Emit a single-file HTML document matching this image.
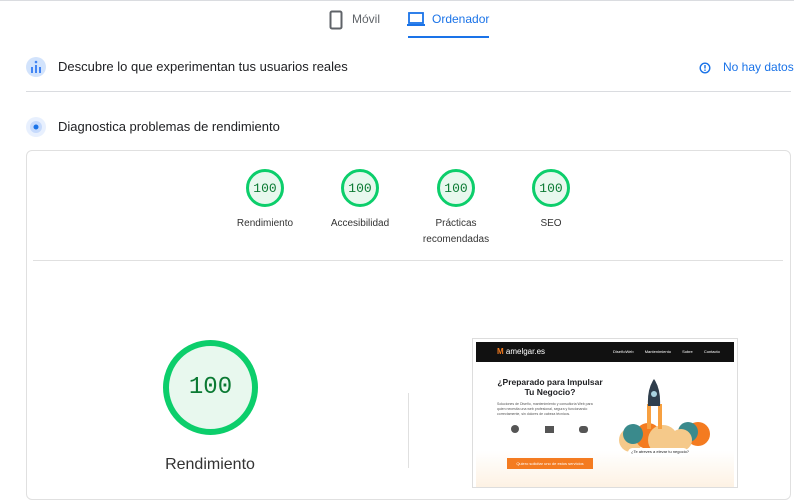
<!DOCTYPE html>
<html><head><meta charset="utf-8"><style>
*{margin:0;padding:0;box-sizing:border-box}
body{width:794px;height:488px;overflow:hidden;background:#fff;font-family:"Liberation Sans",sans-serif;position:relative;color:#202124}
.a{position:absolute}
.g{position:absolute;width:38px;height:38px;border-radius:50%;border:3px solid #0cce6b;background:#e8f8ee;color:#0b7a33;font:13px "Liberation Mono",monospace;display:flex;align-items:center;justify-content:center}
.l{position:absolute;font-size:10px;color:#333;text-align:center;width:100px;line-height:16px}
</style></head><body>
<div class="a" style="left:0;top:0;width:794px;height:1px;background:#dadce0"></div>
<svg class="a" style="left:329px;top:10px" width="14" height="20"><rect x="1.5" y="1.5" width="11" height="17" rx="1.5" fill="none" stroke="#5f6368" stroke-width="2"/></svg>
<div class="a" style="left:352px;top:12px;font-size:12px;color:#5f6368">Móvil</div>
<svg class="a" style="left:407px;top:12px" width="18" height="15"><rect x="2" y="1" width="14" height="10" fill="none" stroke="#1a73e8" stroke-width="1.8"/><rect x="0" y="12" width="18" height="2" fill="#1a73e8"/></svg>
<div class="a" style="left:432px;top:12px;font-size:12px;color:#1a73e8">Ordenador</div>
<div class="a" style="left:408px;top:36px;width:81px;height:2px;background:#1a73e8"></div>
<svg class="a" style="left:26px;top:57px" width="20" height="20"><circle cx="10" cy="10" r="10" fill="#d2e3fc"/><rect x="5" y="10" width="2" height="6" fill="#4285f4"/><rect x="9" y="8" width="2" height="8" fill="#4285f4"/><rect x="13" y="10" width="2" height="6" fill="#4285f4"/><circle cx="10" cy="5" r="1.3" fill="#4285f4"/></svg>
<div class="a" style="left:58px;top:59px;font-size:13px">Descubre lo que experimentan tus usuarios reales</div>
<svg class="a" style="left:699px;top:62px" width="12" height="12"><circle cx="6" cy="6" r="4.8" fill="none" stroke="#1a73e8" stroke-width="1.4"/><rect x="5.3" y="3" width="1.4" height="3.5" fill="#1a73e8"/><rect x="5.3" y="7.5" width="1.4" height="1.4" fill="#1a73e8"/></svg>
<div class="a" style="left:723px;top:60px;font-size:12px;color:#1a73e8">No hay datos</div>
<div class="a" style="left:26px;top:91px;width:765px;height:1px;background:#dadce0"></div>
<svg class="a" style="left:26px;top:117px" width="20" height="20"><circle cx="10" cy="10" r="10" fill="#e8f0fe"/><circle cx="10" cy="10" r="6" fill="#c6dafc"/><circle cx="10" cy="10" r="2.5" fill="#1a73e8"/></svg>
<div class="a" style="left:58px;top:119px;font-size:13px">Diagnostica problemas de rendimiento</div>
<div class="a" style="left:26px;top:150px;width:765px;height:350px;border:1px solid #e0e0e0;border-radius:6px"></div>
<div class="g" style="left:246px;top:169px">100</div>
<div class="g" style="left:341px;top:169px">100</div>
<div class="g" style="left:437px;top:169px">100</div>
<div class="g" style="left:532px;top:169px">100</div>
<div class="l" style="left:215px;top:216px">Rendimiento</div>
<div class="l" style="left:310px;top:216px">Accesibilidad</div>
<div class="l" style="left:406px;top:216px">Prácticas<br>recomendadas</div>
<div class="l" style="left:501px;top:216px">SEO</div>
<div class="a" style="left:33px;top:260px;width:750px;height:1px;background:#e0e0e0"></div>
<div class="a" style="left:163px;top:340px;width:95px;height:95px;border-radius:50%;border:6px solid #0cce6b;background:#e8f8ee;color:#0b7a33;font:24px 'Liberation Mono',monospace;display:flex;align-items:center;justify-content:center">100</div>
<div class="a" style="left:110px;top:456px;width:200px;text-align:center;font-size:16px;color:#333">Rendimiento</div>
<div class="a" style="left:408px;top:393px;width:1px;height:75px;background:#e0e0e0"></div>
<div class="a" style="left:472px;top:338px;width:266px;height:150px;border:1px solid #ddd;background:#fff;overflow:hidden">
 <div class="a" style="left:3px;top:3px;width:258px;height:20px;background:#111"></div>
 <div class="a" style="left:24px;top:8px;font-size:8px;color:#fff"><span style="color:#f47b20;font-weight:bold">M</span> amelgar.es</div>
 <div class="a" style="left:140px;top:10px;font-size:4px;color:#fff;word-spacing:10px">DiseñoWeb Mantenimiento Sobre Contacto</div>
 <div class="a" style="left:3px;top:23px;width:258px;height:127px;background:linear-gradient(#fff 70%,#fdf1e2)"></div>
 <div class="a" style="left:22px;top:38px;width:110px;text-align:center;font-size:8.5px;font-weight:bold;line-height:10px">¿Preparado para Impulsar Tu Negocio?</div>
 <div class="a" style="left:24px;top:63px;width:105px;font-size:3.5px;color:#555;line-height:5px">Soluciones de Diseño, mantenimiento y consultoría Web para quien necesita una web profesional, segura y funcionando correctamente, sin dolores de cabeza técnicos.</div>
 <div class="a" style="left:38px;top:86px;width:8px;height:8px;border-radius:50%;background:#555"></div>
 <div class="a" style="left:72px;top:87px;width:9px;height:7px;background:#555"></div>
 <div class="a" style="left:106px;top:87px;width:9px;height:7px;border-radius:3px;background:#555"></div>
 <div class="a" style="left:34px;top:119px;width:86px;height:11px;background:#f47b20;color:#fff;font-size:4px;text-align:center;line-height:11px">Quiero solicitar uno de estos servicios</div>
 <svg class="a" style="left:130px;top:35px" width="115" height="90"><circle cx="28" cy="66" r="12" fill="#f5c98a"/><circle cx="45" cy="62" r="13" fill="#f47b20"/><circle cx="95" cy="60" r="12" fill="#f47b20"/><circle cx="30" cy="60" r="10" fill="#3a8a8c"/><circle cx="85" cy="58" r="10" fill="#3a8a8c"/><circle cx="60" cy="66" r="15" fill="#f5c98a"/><circle cx="78" cy="66" r="11" fill="#f5c98a"/><rect x="44" y="30" width="4" height="25" fill="#f7a040"/><rect x="55" y="30" width="4" height="25" fill="#f7a040"/><path d="M51 5 Q58 15 57 32 L45 32 Q44 15 51 5Z" fill="#2f3e4c"/><circle cx="51" cy="20" r="3" fill="#a9d3e0"/><rect x="25" y="74" width="60" height="9" rx="4.5" fill="#fff"/></svg>
 <div class="a" style="left:158px;top:110px;font-size:4px">¿Te atreves a elevar tu negocio?</div>
</div>
</body></html>
